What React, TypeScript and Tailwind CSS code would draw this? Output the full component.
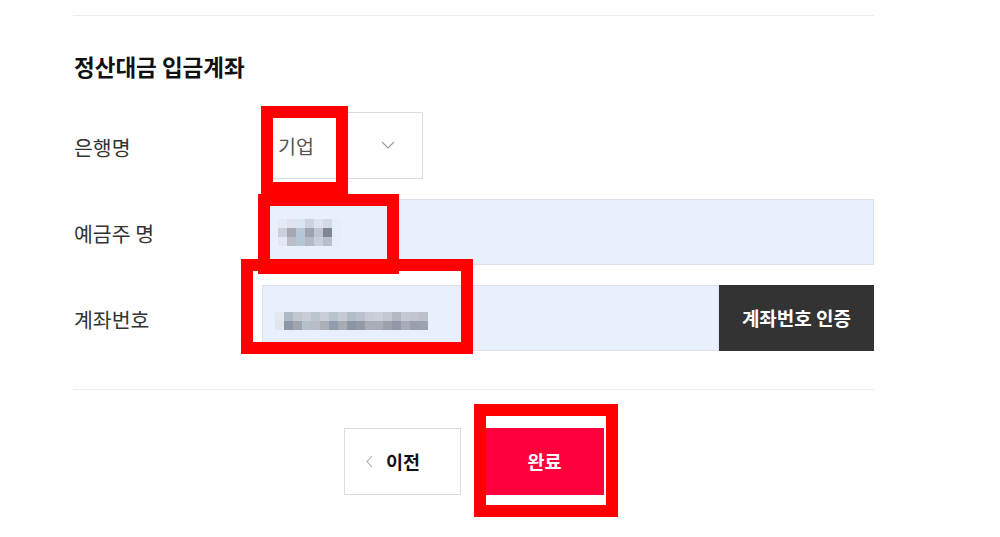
import React from 'react';

const blurA = [
  ['#e6eaf3', '#e0e3ee', '#dce4f0', '#ccd2df', '#dde2ee', '#d3d9e6', '#e5eefb'],
  ['#cad1dc', '#a5a8b1', '#b7c7d7', '#9ea4ae', '#bfc5cf', '#808696', '#e4eefb'],
  ['#e3e7f1', '#babdc6', '#b6c6d5', '#b3b9c5', '#c9cfda', '#b8bfcc', '#e6eefb'],
];

const blurB = [
  ['#e4e8f1', '#b2b9c6', '#c2c6d0', '#c8ccd4', '#bcc4cf', '#c9cdd6', '#b8c3ce', '#c6cad3', '#b4bcc8', '#bcc1cd', '#c8ccd6', '#cdd0d8', '#c3c7d1', '#b2b8c4', '#c4c8d2', '#c0c5d0', '#bcc1cc'],
  ['#e1e5ee', '#8c96a6', '#a0a4ac', '#b6c0cd', '#b7bcc5', '#adb0b6', '#8f9cab', '#a6abb4', '#8b95a3', '#939aa6', '#abaeb8', '#a8acb6', '#9ea1ab', '#9298a6', '#a7acb6', '#9aa0ab', '#9da3ae'],
];

// pixelated (mosaic) placeholder for masked personal data
function Mosaic({ rows }: { rows: string[][] }) {
  return (
    <div className="flex flex-col">
      {rows.map((row, i) => (
        <div key={i} className="flex">
          {row.map((c, j) => (
            <div key={j} className="w-[9px] h-[9px]" style={{ backgroundColor: c }} />
          ))}
        </div>
      ))}
    </div>
  );
}

function Label({ children }: { children: React.ReactNode }) {
  return (
    <div className="w-[189px] shrink-0 pl-px pt-[3px] text-[20.5px] text-[#333] leading-none">{children}</div>
  );
}

export default function App() {
  return (
    <div className="relative w-[1000px] h-[537px] overflow-hidden bg-white font-['Noto_Sans_CJK_KR','Noto_Sans',sans-serif]">
      <div className="ml-[73px] w-[801px]">
        <div className="h-[16px] border-b border-[#ececec]" />

        {/* section title */}
        <h2 className="mt-[35px] h-[30px] pl-px text-[22.5px] font-bold leading-[30px] text-[#111]">
          정산대금 입금계좌
        </h2>

        <div className="mt-[31px] flex flex-col gap-[20px]">
          {/* bank */}
          <div className="flex h-[67px] items-center">
            <Label>은행명</Label>
            <div className="flex h-[67px] w-[161px] items-center justify-between border border-[#dcdcdc] pl-[15px] pr-[27px]">
              <span className="text-[19.5px] text-[#555]">기업</span>
              <svg width="14" height="8" viewBox="0 0 14 8" fill="none" className="mt-[-2px]">
                <path d="M1 1l6 6 6-6" stroke="#999" strokeWidth="1.1" />
              </svg>
            </div>
          </div>

          {/* holder */}
          <div className="flex h-[66px] items-center">
            <Label>예금주 명</Label>
            <div className="flex h-[66px] flex-1 items-center border border-[#dde2ea] bg-[#e8f0fd] pl-[15px]">
              <Mosaic rows={blurA} />
            </div>
          </div>

          {/* account number */}
          <div className="flex h-[66px] items-center">
            <Label>계좌번호</Label>
            <div className="flex h-[66px] flex-1 items-center border border-[#dde2ea] bg-[#e8f0fd] pl-[12px] pt-[6px]">
              <Mosaic rows={blurB} />
            </div>
            <button className="h-[66px] w-[155px] shrink-0 bg-[#333] text-[19px] font-bold text-white">
              계좌번호 인증
            </button>
          </div>
        </div>

        <div className="mt-[38px] border-t border-[#ececec]" />

        <div className="mt-[38px] flex justify-center gap-[25px]">
          <button className="flex h-[67px] w-[117px] items-center justify-center gap-[13px] border border-[#dcdcdc] bg-white pr-[18px]">
            <svg width="7" height="13" viewBox="0 0 7 13" fill="none">
              <path d="M6 1L1 6.5 6 12" stroke="#aaa" strokeWidth="1.1" />
            </svg>
            <span className="text-[18.5px] font-bold text-[#111]">이전</span>
          </button>
          <button className="h-[67px] w-[118px] bg-[#ff003c] text-[18.5px] font-bold text-white">완료</button>
        </div>
      </div>

      {/* red annotation boxes */}
      <div className="absolute left-[261px] top-[106px] h-[88px] w-[87px] border-[12px] border-[#ff0000]" />
      <div className="absolute left-[258px] top-[194px] h-[80px] w-[141px] border-[12px] border-[#ff0000]" />
      <div className="absolute left-[241px] top-[259px] h-[95px] w-[232px] border-[12px] border-[#ff0000]" />
      <div className="absolute left-[474px] top-[404px] h-[113px] w-[144px] border-[12px] border-[#ff0000]" />
    </div>
  );
}
